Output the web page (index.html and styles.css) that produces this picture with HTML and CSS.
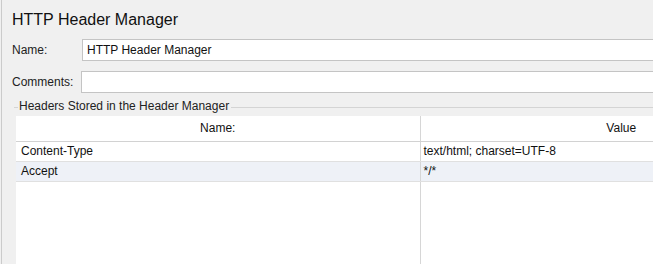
FILE: index.html
```html
<!DOCTYPE html>
<html lang="en">

<head>
  <meta charset="utf-8">
  <title>HTTP Header Manager</title>
  <link rel="stylesheet" href="styles.css">
</head>

<body>
  <div class="panel">
    <h1 class="panel-title">HTTP Header Manager</h1>
    <div class="form-row">
      <label class="form-label" for="name">Name:</label>
      <input class="form-input" id="name" type="text" value="HTTP Header Manager">
    </div>
    <div class="form-row form-row-comments">
      <label class="form-label" for="comments">Comments:</label>
      <input class="form-input" id="comments" type="text" value="">
    </div>
    <div class="group">
      <div class="group-legend">
        <span class="group-line group-line-start"></span>
        <span class="group-text">Headers Stored in the Header Manager</span>
        <span class="group-line"></span>
      </div>
      <table class="headers">
        <thead>
          <tr>
            <th class="col-name">Name:</th>
            <th class="col-value">Value</th>
          </tr>
        </thead>
        <tbody>
          <tr>
            <td class="col-name">Content-Type</td>
            <td class="col-value">text/html; charset=UTF-8</td>
          </tr>
          <tr class="row-alt">
            <td class="col-name">Accept</td>
            <td class="col-value">*/*</td>
          </tr>
          <tr class="row-filler">
            <td class="col-name"></td>
            <td class="col-value"></td>
          </tr>
        </tbody>
      </table>
    </div>
  </div>
</body>

</html>
```

FILE: styles.css
```css
*,
*::before,
*::after {
  box-sizing: border-box;
}

html,
body {
  height: 100%;
}

body {
  margin: 0;
  overflow: hidden;
  background-color: #f0f0f0;
  font-family: "Liberation Sans", Arial, sans-serif;
  color: #1a1a1a;
}

.panel {
  margin-left: 1px;
  height: 100%;
  overflow: hidden;
  border-left: 1px solid #cbcbcb;
  padding: 10px 0 0 10px;
}

.panel-title {
  margin: 0;
  font-size: 16px;
  font-weight: 400;
  line-height: 20px;
  color: #111;
}

.form-row {
  display: flex;
  align-items: center;
  margin-top: 9px;
}

.form-row-comments {
  margin-top: 10px;
}

.form-label {
  width: 70px;
  font-size: 12px;
  color: #222;
}

.form-row-comments .form-label {
  width: 69px;
}

.form-input {
  flex: 1;
  min-width: 0;
  height: 22px;
  margin: 0;
  padding: 0 4px;
  border: 1px solid #c4c4c4;
  border-right: none;
  background: #fff;
  font-family: inherit;
  font-size: 12px;
  color: #111;
  outline: none;
}

.group {
  margin-top: 7px;
  margin-left: 2px;
  overflow: hidden;
}

.group-legend {
  display: flex;
  align-items: center;
  height: 14px;
  font-size: 12px;
  color: #222;
}

.group-line {
  flex: 1;
  height: 1px;
  background-color: #d4d4d4;
}

.group-line-start {
  flex: none;
  width: 4px;
}

.group-text {
  padding: 0 2px 3px 1px;
}

.headers {
  margin-top: 2px;
  margin-left: 2px;
  width: 806px;
  height: 148px;
  border-collapse: collapse;
  background-color: #fff;
  font-size: 12px;
  color: #111;
}

.headers th {
  height: 25px;
  padding: 0;
  font-weight: 400;
  text-align: center;
  border-bottom: 1px solid #d2d2d2;
}

.headers td {
  height: 20px;
  padding: 0 0 0 5px;
  border-bottom: 1px solid #e0e0e0;
  white-space: nowrap;
}

.headers .col-name {
  width: 404px;
  border-right: 1px solid #d6d6d6;
}

.headers td.col-value {
  padding-left: 3px;
}

.row-alt td {
  background-color: #eef1f7;
}

.row-filler td {
  height: auto;
  border-bottom: none;
}
```
